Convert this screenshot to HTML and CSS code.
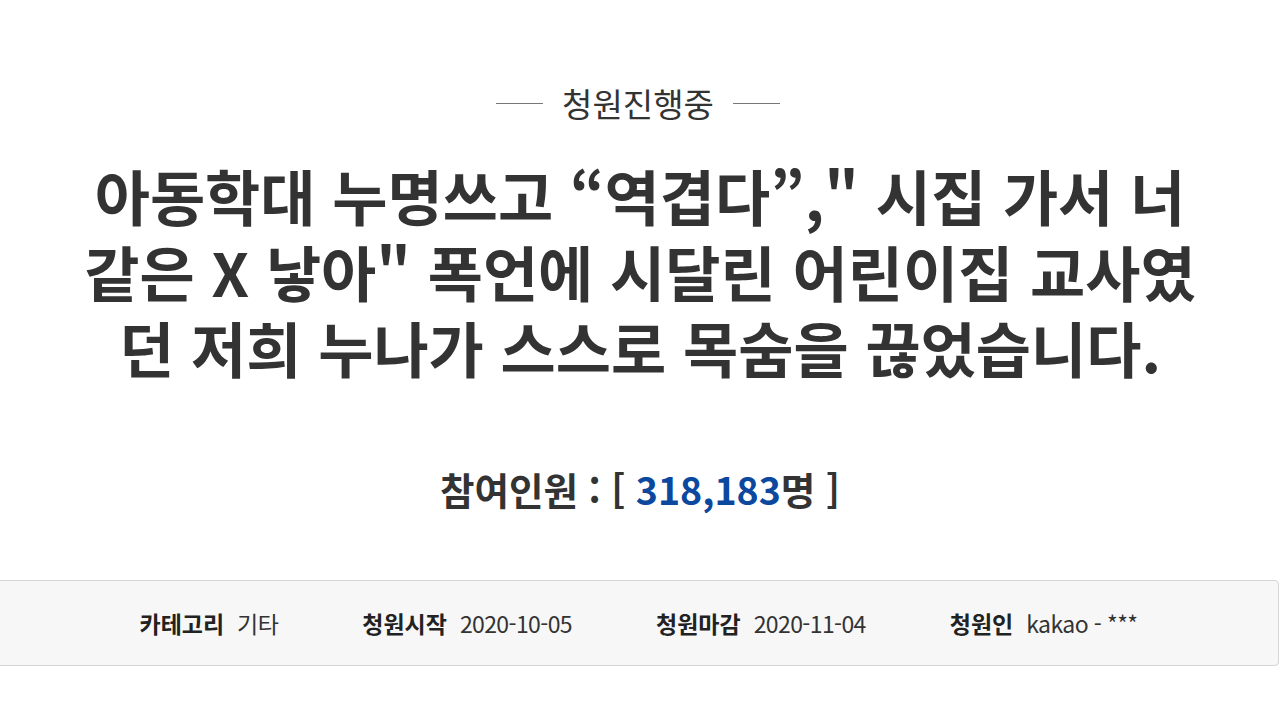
FILE: index.html
```html
<!DOCTYPE html>
<html lang="ko">
<head>
<meta charset="utf-8">
<link rel="stylesheet" href="styles.css">
</head>
<body>
<div class="page">
  <div class="status">
    <span class="status-line"></span>
    <span class="status-text">청원진행중</span>
    <span class="status-line"></span>
  </div>
  <h1 class="title">아동학대 누명쓰고 “역겹다”," 시집 가서 너<br>같은 X 낳아" 폭언에 시달린 어린이집 교사였<br>던 저희 누나가 스스로 목숨을 끊었습니다.</h1>
  <div class="count">참여인원 : [ <span class="count-num">318,183</span>명 ]</div>
  <div class="info">
    <div class="info-item"><span class="info-label">카테고리</span><span class="info-value">기타</span></div>
    <div class="info-item"><span class="info-label">청원시작</span><span class="info-value">2020-10-05</span></div>
    <div class="info-item"><span class="info-label">청원마감</span><span class="info-value">2020-11-04</span></div>
    <div class="info-item"><span class="info-label">청원인</span><span class="info-value">kakao - ***</span></div>
  </div>
</div>
</body>
</html>
```
FILE: styles.css
```css
html, body {
  margin: 0;
  padding: 0;
  background: #ffffff;
}
body {
  font-family: "Noto Sans CJK KR", "Noto Sans", sans-serif;
  color: #333333;
}
.page {
  width: 1280px;
  height: 720px;
  overflow: hidden;
  padding-top: 82px;
  box-sizing: border-box;
}
.status {
  display: flex;
  justify-content: center;
  align-items: center;
  gap: 19px;
  height: 42px;
  margin-left: -4px;
}
.status-line {
  display: block;
  width: 47px;
  height: 1px;
  background: #777777;
}
.status-text {
  font-size: 33px;
  line-height: 42px;
  font-weight: 400;
  color: #333333;
}
.title {
  margin: 33px 0 0 0;
  text-align: center;
  font-size: 60px;
  line-height: 76px;
  font-weight: 700;
  color: #333333;
  letter-spacing: 0;
}
.count {
  margin-top: 79px;
  text-align: center;
  font-size: 37.5px;
  line-height: 50px;
  font-weight: 700;
  color: #333333;
}
.count-num {
  color: #0b489e;
}
.info {
  margin-top: 66px;
  margin-left: -2px;
  width: 1281px;
  height: 86px;
  box-sizing: border-box;
  background: #f7f7f7;
  border: 1px solid #d6d6d6;
  border-radius: 0 4px 4px 0;
  display: flex;
  justify-content: center;
  align-items: center;
  gap: 84px;
}
.info-item {
  display: flex;
  align-items: center;
  gap: 13px;
  font-size: 23px;
  line-height: 30px;
}
.info-label {
  font-weight: 700;
  color: #222222;
}
.info-value {
  font-weight: 400;
  color: #333333;
  letter-spacing: -0.6px;
}
```
